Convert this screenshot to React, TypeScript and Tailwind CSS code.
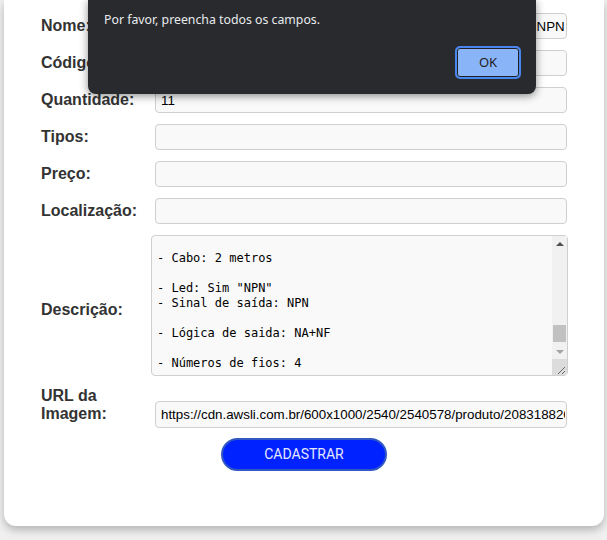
import { useEffect, useRef } from "react";

const descricao = [
  "Sensor Indutivo de Proximidade",
  "",
  "O sensor indutivo é um dispositivo capaz de",
  "detectar a aproximação de objetos metálicos",
  "sem a necessidade de contato físico.",
  "",
  "Aplicações:",
  "- Automação industrial",
  "- Detecção de posição",
  "- Contagem de peças",
  "",
  "Especificações:",
  "",
  "- Modelo: LJ12A3-4-Z/AX",
  "",
  "- Formato: Cilíndrico",
  "",
  "- Diâmetro: M12",
  "",
  "- Comprimento: 60mm",
  "",
  "- Distância de detecção: 4mm",
  "",
  "- Tensão de operação: 6 a 36VDC",
  "",
  "- Corrente de saída: 300mA",
  "",
  "- Frequência de resposta: 0,5kHz",
  "",
  "- Objeto detectável: Metais",
  "",
  "- Temperatura de operação: -25 a 55°C",
  "",
  "- Material da carcaça: Metal",
  "",
  "- Grau de proteção: IP67",
  "",
  "- Tipo: Faceado",
  "",
  "- Conexão: Cabo",
  "",
  "- Cor do cabo: Marrom, Azul, Preto e Branco",
  "- Proteção contra curto-circuito: Sim",
  "",
  "- Cabo: 2 metros",
  "",
  '- Led: Sim "NPN"',
  "- Sinal de saída: NPN",
  "",
  "- Lógica de saida: NA+NF",
  "",
  "- Números de fios: 4",
  "",
  "- Garantia: 3 meses",
  "",
  "Itens inclusos:",
  "- 1x Sensor Indutivo",
].join("\n");

const inputCls =
  "h-[26px] w-[412px] rounded-[4px] border border-[#cfcfcf] bg-[#f9f9f9] pl-[5px] pr-[1px] text-[13.333px] text-black outline-none [font-family:'Liberation_Sans',Arial,sans-serif]";

function Row({ label, children }: { label: string; children: React.ReactNode }) {
  return (
    <div className="flex items-center">
      <label className="w-[114px] text-[16px] font-bold leading-[18px] text-[#333]">{label}</label>
      {children}
    </div>
  );
}

// scrollbar drawn by hand, the headless browser hides the native one
function FakeScrollbar() {
  return (
    <div className="pointer-events-none absolute bottom-[1px] right-[1px] top-[1px] flex w-[15px] flex-col bg-[#f1f1f1]">
      <div className="flex h-[15px] items-center justify-center">
        <div className="h-0 w-0 border-x-[4px] border-b-[4px] border-x-transparent border-b-[#505050]" />
      </div>
      <div className="relative flex-1">
        <div className="absolute left-[1px] right-[1px] top-[74px] h-[17px] bg-[#c1c1c1]" />
      </div>
      <div className="flex h-[15px] items-center justify-center">
        <div className="h-0 w-0 border-x-[4px] border-t-[4px] border-x-transparent border-t-[#a3a3a3]" />
      </div>
      <div className="h-[16px] rounded-br-[3px] bg-[#dcdcdc]">
        <svg width="15" height="16" viewBox="0 0 15 16">
          <path d="M13 8 L6 15 M13 12 L10 15" stroke="#6b6b6b" strokeWidth="1" fill="none" />
        </svg>
      </div>
    </div>
  );
}

export default function App() {
  const descRef = useRef<HTMLTextAreaElement>(null);

  // keep the scrolled state seen in the screenshot
  useEffect(() => {
    if (descRef.current) descRef.current.scrollTop = 650;
  }, []);

  return (
    <div className="relative min-h-[540px] bg-[#f0f0f0] [font-family:'Liberation_Sans',Arial,sans-serif]">
      <div className="ml-[4px] w-[600px] rounded-b-[12px] bg-white pb-[55px] pl-[37px] pt-[13px] shadow-[0_4px_8px_rgba(0,0,0,0.25)]">
        <form className="flex flex-col gap-[11px]" onSubmit={(e) => e.preventDefault()}>
          <Row label="Nome:">
            <input
              className={inputCls}
              defaultValue="Sensor Indutivo Proximidade LJ12A3-4Z/BX Tubular M12 4mm NPN 6-36V"
            />
          </Row>
          <Row label="Código:">
            <input className={inputCls} defaultValue="" />
          </Row>
          <Row label="Quantidade:">
            <input className={inputCls} defaultValue="11" />
          </Row>
          <Row label="Tipos:">
            <input className={inputCls} />
          </Row>
          <Row label="Preço:">
            <input className={inputCls} />
          </Row>
          <Row label="Localização:">
            <input className={inputCls} />
          </Row>
          <div className="flex items-center">
            <label className="mt-[9px] w-[110px] text-[16px] font-bold leading-[18px] text-[#333]">Descrição:</label>
            <div className="relative">
              <textarea
                ref={descRef}
                spellCheck={false}
                defaultValue={descricao}
                className="block h-[141px] w-[417px] resize-none overflow-hidden rounded-[4px] border border-[#cfcfcf] bg-[#f9f9f9] py-[5px] pl-[5px] pr-[20px] text-[12px] leading-[15px] text-black outline-none [font-family:'DejaVu_Sans_Mono',monospace]"
              />
              <FakeScrollbar />
            </div>
          </div>
          <div className="flex items-start">
            <label className="w-[114px] text-[16px] font-bold leading-[18px] text-[#333]">
              URL da
              <br />
              Imagem:
            </label>
            <input
              className={inputCls + " mt-[14px] h-[27px]"}
              defaultValue="https://cdn.awsli.com.br/600x1000/2540/2540578/produto/208318826"
            />
          </div>
          <div className="-ml-[37px] -mt-[1px] flex justify-center">
            <button
              type="submit"
              className="h-[33px] w-[166px] rounded-full border-2 border-[#3159c4] bg-[#0022ff] text-[14px] text-[#e6e8ff] [font-family:Roboto,sans-serif]"
            >
              CADASTRAR
            </button>
          </div>
        </form>
      </div>

      {/* alert do navegador */}
      <div className="absolute left-[88px] top-0 h-[94px] w-[448px] rounded-b-[8px] bg-[#292a2d] shadow-[0_2px_8px_rgba(0,0,0,0.45)]">
        <p className="pl-[16px] pt-[11px] text-[12.3px] leading-[18px] text-[#e8eaed] [font-family:'Noto_Sans',sans-serif]">
          Por favor, preencha todos os campos.
        </p>
        <button className="absolute left-[367px] top-[46px] h-[33px] w-[66px] rounded-[5px] border-2 border-[#4a86f0] bg-[#8ab4f8] text-[13px] text-[#202124] shadow-[inset_0_0_0_1px_#202124] [font-family:'Noto_Sans',sans-serif]">
          OK
        </button>
      </div>
    </div>
  );
}
